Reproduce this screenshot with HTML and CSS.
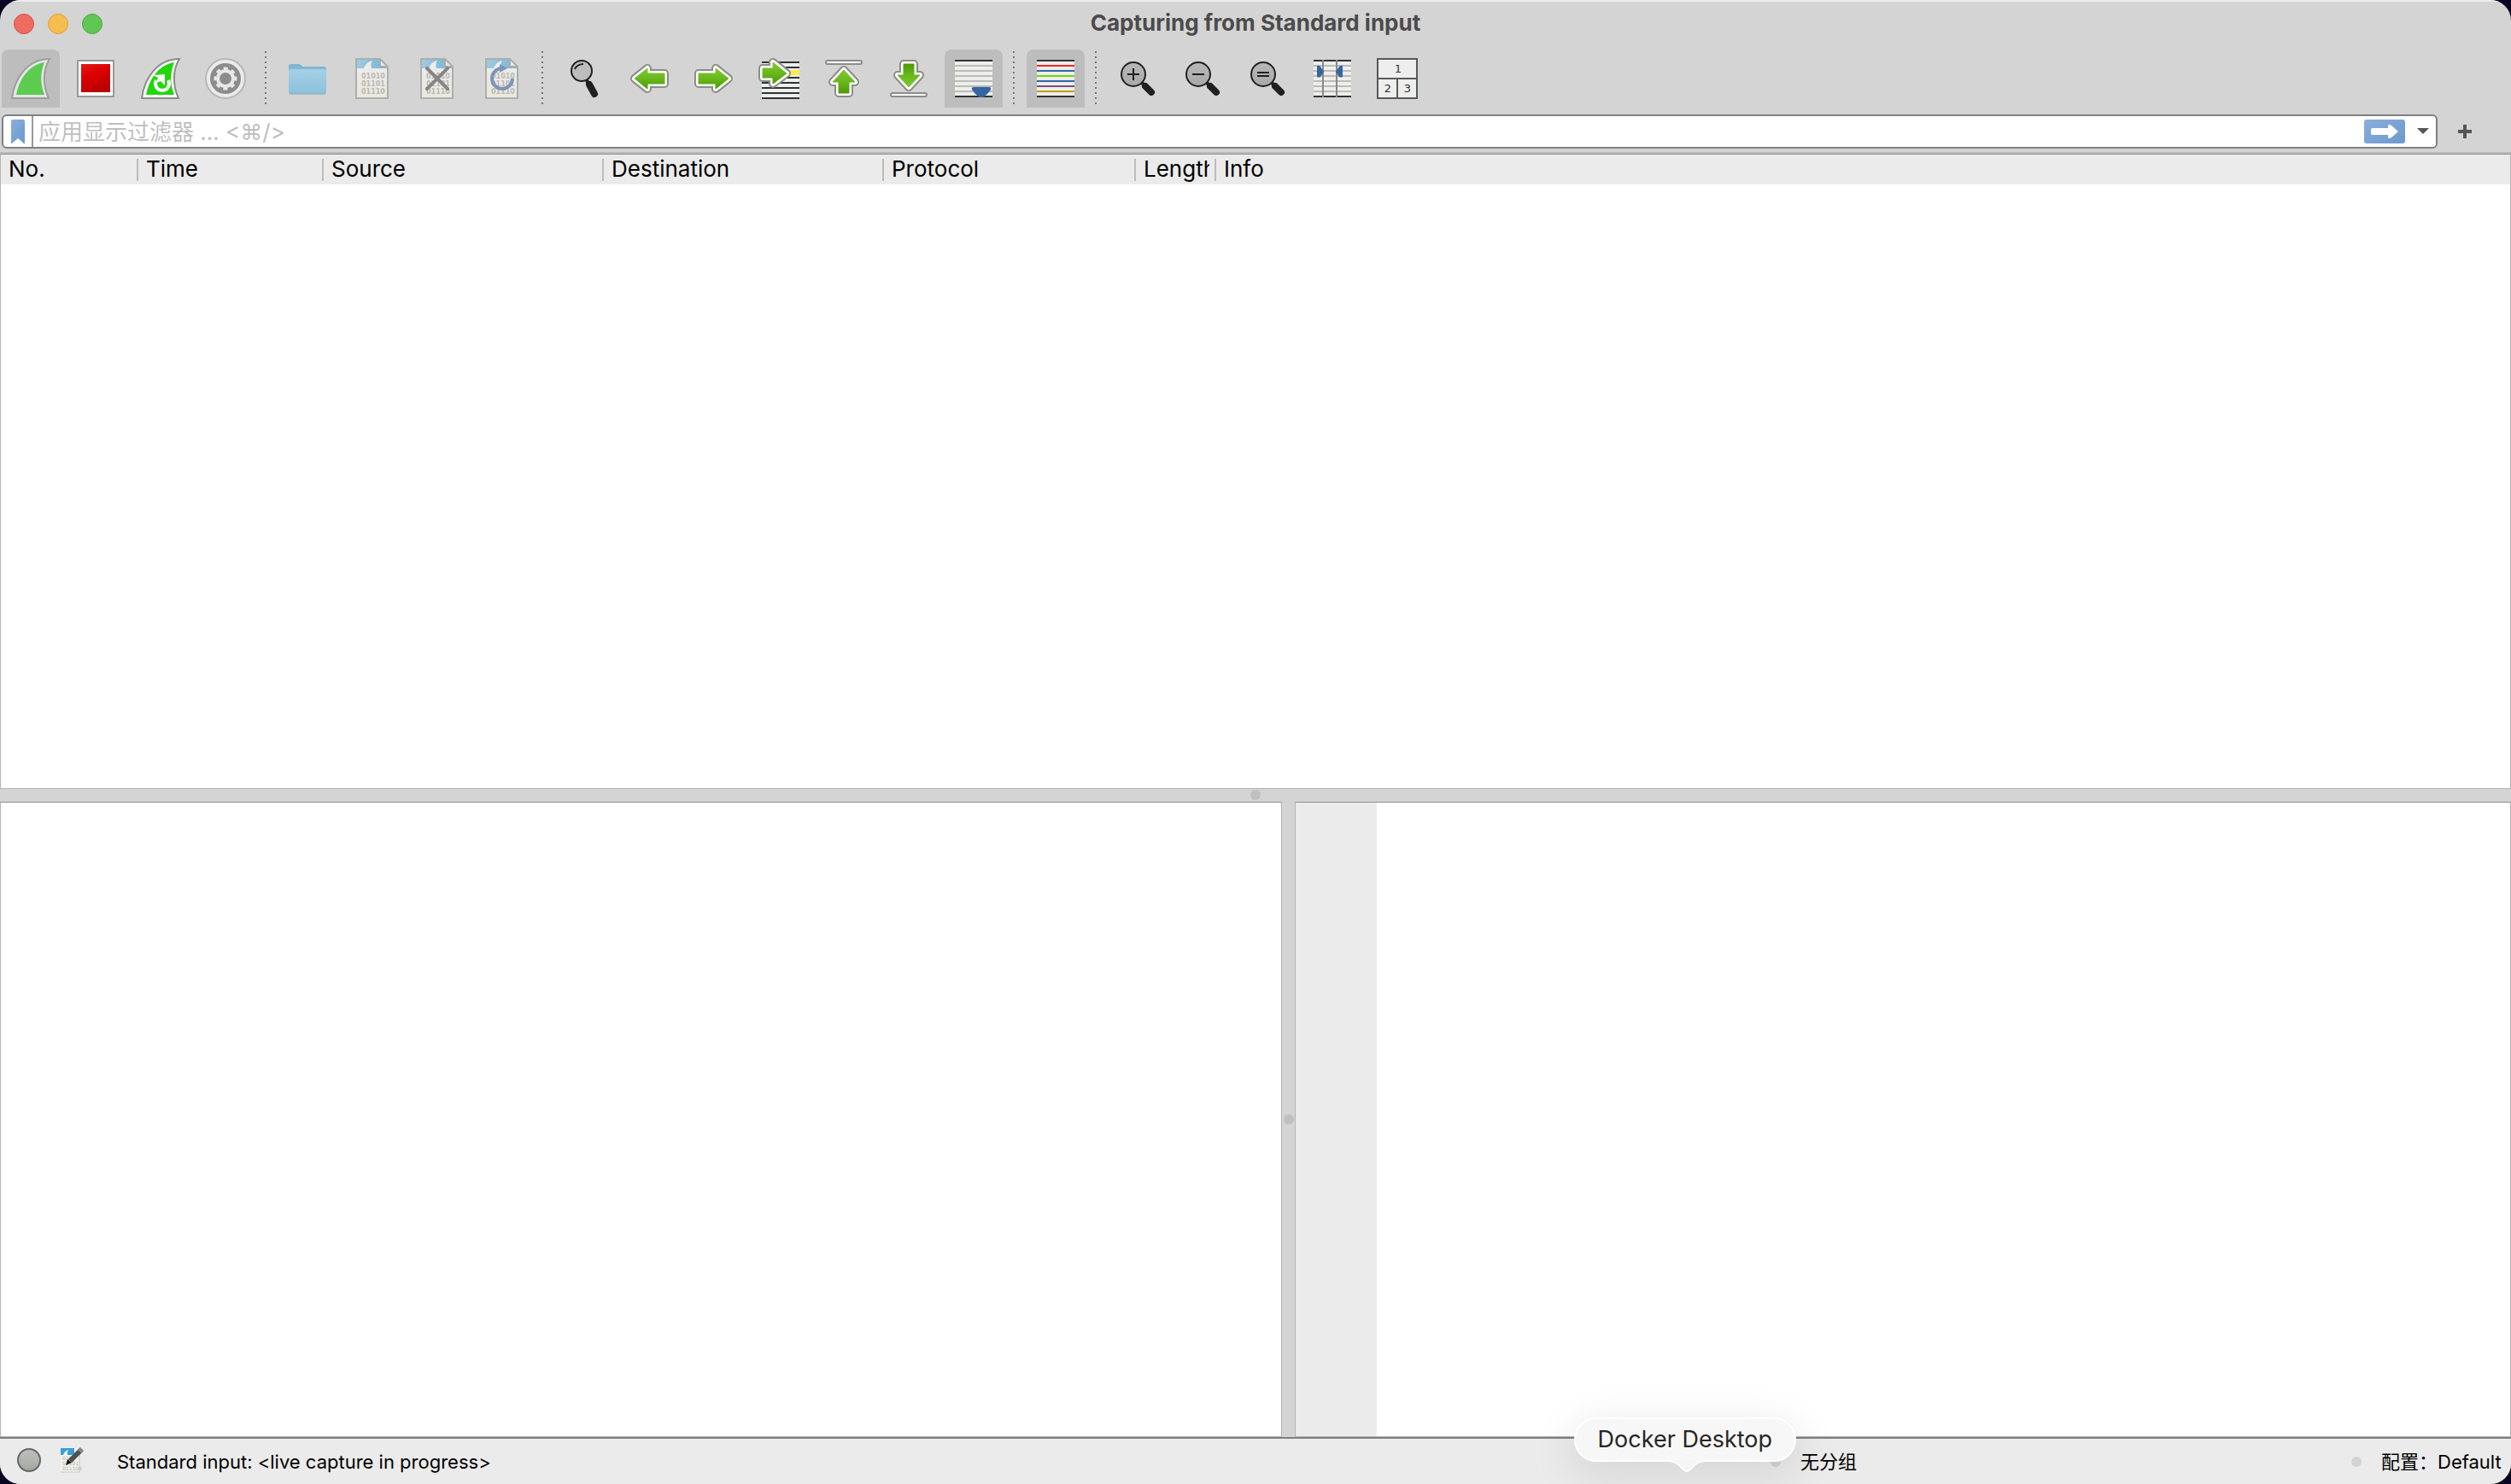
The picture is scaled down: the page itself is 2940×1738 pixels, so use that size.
FILE: index.html
```html
<!DOCTYPE html>
<html lang="zh-CN">
<head>
<meta charset="utf-8">
<title>Capturing from Standard input</title>
<link rel="stylesheet" href="styles.css">
</head>
<body>
<svg class="defs" aria-hidden="true">
  <defs>
    <linearGradient id="green" x1="0" y1="0" x2="0" y2="1"><stop offset="0" stop-color="#80c837"/><stop offset=".5" stop-color="#69b81c"/><stop offset="1" stop-color="#4e9a06"/></linearGradient>
    <linearGradient id="red" x1="0" y1="0" x2=".4" y2="1"><stop offset="0" stop-color="#e01c1c"/><stop offset=".45" stop-color="#dd0000"/><stop offset="1" stop-color="#b80000"/></linearGradient>
    <linearGradient id="folder" x1="0" y1="0" x2="0" y2="1"><stop offset="0" stop-color="#a4d0e6"/><stop offset="1" stop-color="#8bc1dc"/></linearGradient>
    <linearGradient id="sky" x1="0" y1="0" x2="1" y2="0"><stop offset="0" stop-color="#9dcbe2"/><stop offset="1" stop-color="#72b5d6"/></linearGradient>
    <linearGradient id="paper" x1="0" y1="0" x2="0" y2="1"><stop offset="0" stop-color="#ececec"/><stop offset="1" stop-color="#e9e8dc"/></linearGradient>
    <linearGradient id="blue" x1="0" y1="0" x2="1" y2="1"><stop offset="0" stop-color="#8aaedb"/><stop offset="1" stop-color="#6b99cf"/></linearGradient>
    <linearGradient id="lens" x1="0" y1="0" x2="0" y2="1"><stop offset="0" stop-color="#b8b8b8"/><stop offset="1" stop-color="#a8a8a8"/></linearGradient>
    <linearGradient id="ball" x1="0" y1="0" x2="0" y2="1"><stop offset="0" stop-color="#bfc1bc"/><stop offset="1" stop-color="#a4a69f"/></linearGradient>
    <symbol id="fin" viewBox="0 0 68 68">
      <path d="M12 57C15 34 30 11 56 11C48 24 48 42 55 57Z" fill="#fff" stroke="#8c8c8c" stroke-width="2"/>
      <path d="M17 53C20 36 31 18 50 15C45 28 45 40 50 53Z" fill="#22d60c"/>
    </symbol>
    <symbol id="doc" viewBox="0 0 68 68">
      <path d="M15 11H43L52 20V57H15Z" fill="url(#paper)"/>
      <path d="M16 12H43V20H51V22H16Z" fill="url(#sky)"/>
      <path d="M24 22C26 17 29 14 34 13C32 16 32 19 33 22Z" fill="#ececec"/>
      <path d="M43 11V20H52Z" fill="#e6e6e4"/>
      <path d="M15 11H43L52 20V57H15ZM43 11V20H52" fill="none" stroke="#aeaeaa" stroke-width="2"/>
      <g class="bits"><text x="21" y="34">01010</text><text x="21" y="43">01101</text><text x="21" y="52">01110</text></g>
    </symbol>
    <symbol id="arrow" viewBox="0 0 68 68">
      <g stroke-linejoin="round"><path d="M17 34L32 22V28H52V40H32V46Z" fill="none" stroke="#8c8d88" stroke-width="10"/>
      <path d="M17 34L32 22V28H52V40H32V46Z" fill="none" stroke="#fff" stroke-width="6"/>
      <path d="M17 34L32 22V28H52V40H32V46Z" fill="url(#green)" stroke="url(#green)"/></g>
    </symbol>
    <symbol id="sheet" viewBox="0 0 68 68">
      <path d="M12 12H56V56H12Z" fill="#eeeeec"/>
      <path d="M12 19H56M12 25H56M12 31H56M12 37H56M12 43H56M12 49H56" stroke="#babdb6" stroke-width="2"/>
      <path d="M12 13H56M12 55H56" stroke="#2e3436" stroke-width="2"/>
    </symbol>
    <symbol id="glass" viewBox="0 0 68 68">
      <path d="M43 43L50 50" stroke="#202020" stroke-width="8" stroke-linecap="round"/><path d="M38 38L43 43" stroke="#202020" stroke-width="4"/>
      <circle cx="29" cy="29" r="14" fill="url(#lens)" stroke="#202020" stroke-width="2"/>
    </symbol>
  </defs>
</svg>
<div class="window">
  <header class="titlebar">
    <div class="lights">
      <button class="light light-close" aria-label="Close"></button>
      <button class="light light-minimize" aria-label="Minimize"></button>
      <button class="light light-zoom" aria-label="Zoom"></button>
    </div>
    <h1 class="title">Capturing from Standard input</h1>
  </header>

  <nav class="toolbar" aria-label="Main toolbar">
    <button class="tool tool-on" aria-label="Start capture"><svg class="icon faded"><use href="#fin"/></svg></button>
    <button class="tool" aria-label="Stop capture"><svg class="icon"><path d="M13 13H55V55H13Z" fill="#fff" stroke="#999" stroke-width="2"/><path d="M17 17H51V50H17Z" fill="url(#red)"/></svg></button>
    <button class="tool" aria-label="Restart capture"><svg class="icon"><use href="#fin"/><path d="M29 36A8 8 0 1 0 43 36" fill="none" stroke="#fff" stroke-width="4"/><path d="M25 30L39 29V42L34 37L29 39L31 33Z" fill="#fff"/></svg></button>
    <button class="tool" aria-label="Capture options"><svg class="icon"><circle cx="34" cy="34" r="23" fill="#ebebeb" stroke="#b7b7b7" stroke-width="2"/><circle cx="34" cy="34" r="18" fill="#8c8c8c"/><circle cx="34" cy="34" r="12" fill="none" stroke="#e8e8e8" stroke-width="3" stroke-dasharray="5 4.42" transform="rotate(-12 34 34)"/><circle cx="34" cy="34" r="9" fill="none" stroke="#e8e8e8" stroke-width="4"/></svg></button>
    <span class="divider"></span>
    <button class="tool" aria-label="Open file"><svg class="icon"><path d="M12 20Q12 17 15 17H24Q27 17 28 20H53Q56 20 56 23V50Q56 52 54 52H14Q12 52 12 50Z" fill="#80b7d2"/><path d="M12 25Q12 23 14 23H54Q56 23 56 25V50Q56 52 54 52H14Q12 52 12 50Z" fill="url(#folder)"/><path d="M13 52H55" stroke="#8aa9b8"/></svg></button>
    <button class="tool" aria-label="Save file"><svg class="icon"><use href="#doc"/></svg></button>
    <button class="tool" aria-label="Close file"><svg class="icon"><use href="#doc"/><path d="M22 22L46 46M46 22L22 46" stroke="#858585" stroke-width="4" stroke-linecap="round"/></svg></button>
    <button class="tool" aria-label="Reload file"><svg class="icon"><use href="#doc"/><path d="M33 22A12 12 0 1 0 46 34" fill="none" stroke="#7f94ba" stroke-width="4"/><path d="M31 17L40 22L31 27Z" fill="#7f94ba"/></svg></button>
    <span class="divider"></span>
    <button class="tool" aria-label="Find packet"><svg class="icon"><circle cx="31" cy="25" r="12" fill="#bdbdbd" stroke="#202020" stroke-width="2"/><path d="M23 23Q26 17 33 17" fill="none" stroke="#202020" stroke-width="2"/><path d="M37 36L40 42" stroke="#202020" stroke-width="4"/><path d="M40 41L46 52" stroke="#202020" stroke-width="8" stroke-linecap="round"/></svg></button>
    <button class="tool" aria-label="Previous packet"><svg class="icon"><use href="#arrow"/></svg></button>
    <button class="tool" aria-label="Next packet"><svg class="icon"><use href="#arrow" transform="matrix(-1 0 0 1 68 0)"/></svg></button>
    <button class="tool" aria-label="Go to packet"><svg class="icon"><path d="M14 14H58V58H14Z" fill="#eeeeec"/><path d="M14 15H58M14 21H58M14 33H58M14 39H58M14 45H58M14 51H58M14 57H58" stroke="#2e3436" stroke-width="2"/><path d="M40 24H58V30H40Z" fill="#fce94f"/><g stroke-linejoin="round"><path d="M15 22H27V15L43 28L27 40V33H15Z" fill="none" stroke="#8c8d88" stroke-width="10"/><path d="M15 22H27V15L43 28L27 40V33H15Z" fill="url(#green)" stroke="#fff" stroke-width="6"/><path d="M15 22H27V15L43 28L27 40V33H15Z" fill="url(#green)" stroke="url(#green)"/></g></svg></button>
    <button class="tool" aria-label="First packet"><svg class="icon"><g id="edge"><rect x="13" y="13" width="42" height="4" rx="2" fill="#fff" stroke="#8c8d88" stroke-width="2"/><g stroke-linejoin="round"><path d="M34 24L47 38H40V51H28V38H21Z" fill="none" stroke="#8c8d88" stroke-width="10"/><path d="M34 24L47 38H40V51H28V38H21Z" fill="none" stroke="#fff" stroke-width="6"/><path d="M34 24L47 38H40V51H28V38H21Z" fill="url(#green)" stroke="url(#green)"/></g></g></svg></button>
    <button class="tool" aria-label="Last packet"><svg class="icon"><use href="#edge" transform="matrix(1 0 0 -1 0 68)"/></svg></button>
    <button class="tool tool-on" aria-label="Auto scroll"><svg class="icon"><use href="#sheet"/><path d="M34 44H52Q55 44 54 47Q51 52 45 56H41Q35 52 32 47Q31 44 34 44Z" fill="#3465a4"/></svg></button>
    <span class="divider"></span>
    <button class="tool tool-on" aria-label="Colorize packets"><svg class="icon"><path d="M12 12H56V56H12Z" fill="#eeeeec"/><g stroke-width="2"><path d="M12 13H56M12 55H56" stroke="#2e3436"/><path d="M12 19H56" stroke="#ef2929"/><path d="M12 25H56M12 37H56" stroke="#3465a4"/><path d="M12 31H56" stroke="#73d216"/><path d="M12 43H56" stroke="#75507b"/><path d="M12 49H56" stroke="#c4a000"/></g></svg></button>
    <span class="divider"></span>
    <button class="tool" aria-label="Zoom in"><svg class="icon"><use href="#glass"/><path d="M22 29H36M29 22V36" stroke="#202020" stroke-width="2"/></svg></button>
    <button class="tool" aria-label="Zoom out"><svg class="icon"><use href="#glass"/><path d="M22 29H36" stroke="#202020" stroke-width="2"/></svg></button>
    <button class="tool" aria-label="Normal size"><svg class="icon"><use href="#glass"/><path d="M22 27H36M22 31H36" stroke="#202020" stroke-width="2"/></svg></button>
    <button class="tool" aria-label="Resize columns"><svg class="icon"><use href="#sheet"/><path d="M23 12V56M39 12V56" stroke="#888a85" stroke-width="2"/><path d="M16 19Q18 18 20 20L24 26L20 32Q18 33 16 32ZM46 19Q44 18 42 20L38 26L42 32Q44 33 46 32Z" fill="#3465a4"/></svg></button>
    <button class="tool" aria-label="Layout"><svg class="icon"><path d="M11 11H57V57H11ZM11 34H57M34 34V57" fill="#eeeeec" stroke="#555a5c" stroke-width="2"/><g class="digits"><text x="35" y="27">1</text><text x="23" y="50">2</text><text x="46" y="50">3</text></g></svg></button>
  </nav>

  <form class="filterbar">
    <div class="filter">
      <button class="bookmark" type="button" aria-label="Bookmarks"><svg width="16" height="28"><path d="M0 2Q0 0 2 0H14Q16 0 16 2V28H15L8 22L1 28H0Z" fill="url(#blue)"/></svg></button>
      <input class="filter-input" type="text" aria-label="显示过滤器" placeholder="应用显示过滤器 … &lt;⌘/&gt;">
      <button class="apply" type="button" aria-label="Apply"><svg width="48" height="28"><rect width="48" height="28" rx="3" fill="url(#blue)"/><path d="M10 10H28V7Q29 5 32 7L40 14L32 21Q29 23 28 21V18H10Q8 18 8 16V12Q8 10 10 10Z" fill="#fff"/></svg></button>
      <button class="recent" type="button" aria-label="Recent filters"><svg width="14" height="8"><path d="M0 0H14L7 7Z" fill="#555753"/></svg></button>
    </div>
    <button class="add" type="button" aria-label="Add filter button"><svg width="16" height="16"><path d="M0 8H16M8 0V16" stroke="#555" stroke-width="4"/></svg></button>
  </form>

  <main class="content">
    <section class="packets">
      <table class="packet-table">
        <colgroup><col class="w-no"><col class="w-time"><col class="w-addr"><col class="w-addr"><col class="w-proto"><col class="w-len"><col></colgroup>
        <thead><tr><th><span>No.</span></th><th><span>Time</span></th><th><span>Source</span></th><th><span>Destination</span></th><th><span>Protocol</span></th><th><span>Length</span></th><th><span>Info</span></th></tr></thead>
      </table>
    </section>
    <div class="split split-row"></div>
    <div class="panes">
      <section class="details"></section>
      <div class="split split-col"></div>
      <section class="bytes"><div class="gutter"></div></section>
    </div>
  </main>

  <footer class="status">
    <div class="status-main">
      <button class="status-button" aria-label="Expert information"><svg width="30" height="30"><circle cx="15" cy="15" r="13" fill="url(#ball)" stroke="#63676a" stroke-width="2"/></svg></button>
      <button class="status-button" aria-label="Capture comment"><svg width="30" height="30"><path d="M2 1H24V29H2Z" fill="#f4f4ee"/><path d="M2 1H18V9H2Z" fill="#38a0d6"/><path d="M5 9Q7 4 11 3Q9 6 10 9Z" fill="#f4f4ee"/><g class="bits-small"><text x="4" y="15">0101</text><text x="4" y="21">01101</text><text x="4" y="27">011100</text></g><path d="M2 29H24V8" fill="none" stroke="#c4c4bc"/><path d="M13 16L26 3" stroke="#505050" stroke-width="6"/><path d="M24 5L27 2" stroke="#888" stroke-width="6"/><path d="M8 21L10 14L15 18Z" fill="#151515"/></svg></button>
      <span class="status-text">Standard input: &lt;live capture in progress&gt;</span>
    </div>
    <div class="status-part">无分组</div>
    <div class="status-part">配置：Default</div>
  </footer>
  <div class="tooltip" role="tooltip">Docker Desktop<svg class="tail" width="44" height="16"><path d="M0 0C14 0 15 12 22 14C29 12 30 0 44 0Z" fill="#f5f5f5"/><path d="M0 1C14 1 15 12 22 13C29 12 30 1 44 1" fill="none" stroke="#fff" stroke-width="2"/></svg></div>
</div>
</body>
</html>
```
FILE: styles.css
```css
* { box-sizing: border-box; }

body {
  margin: 0;
  background: #0a0420;
  color: #000;
  font-family: Inter, "Noto Sans CJK SC", sans-serif;
  font-size: 26px;
}

button {
  display: grid;
  place-items: center;
  margin: 0;
  padding: 0;
  border: 0;
  background: none;
  font: inherit;
}

svg { display: block; }

.defs {
  position: absolute;
  width: 0;
  height: 0;
}

.window {
  position: relative;
  display: flex;
  flex-direction: column;
  min-height: 100vh;
  overflow: hidden;
  border-radius: 24px;
  background: #d4d4d4;
}

/* Title bar */
.titlebar {
  display: grid;
  grid-template-columns: 1fr auto 1fr;
  align-items: center;
  height: 58px;
  padding: 0 16px 4px;
  border-top: 2px solid #ededed;
}

.lights { display: flex; gap: 16px; }

.light {
  width: 24px;
  height: 24px;
  border: 1px solid;
  border-radius: 50%;
}

.light-close { background: #ed6b60; border-color: #d55044; }
.light-minimize { background: #f5bf50; border-color: #d8a03b; }
.light-zoom { background: #62c655; border-color: #4aa93d; }

.title {
  margin: 0;
  padding-bottom: 2px;
  color: #4b4b4b;
  font-size: 26px;
  font-weight: 700;
  line-height: 32px;
}

/* Toolbar */
.toolbar {
  display: flex;
  gap: 8px;
  padding: 0 2px 8px;
}

.tool {
  width: 68px;
  height: 68px;
}

.tool-on {
  border-radius: 8px 8px 0 0;
  background: #bdbdbd;
}

.icon { width: 68px; height: 68px; }
.faded { opacity: .62; }

.divider {
  width: 12px;
  height: 64px;
  margin-top: 2px;
  background: repeating-linear-gradient(#777 0 2px, transparent 2px 6px) 4px 0 / 2px 100% no-repeat;
}

.bits { fill: #b9b9b5; font: 700 8px "DejaVu Sans", sans-serif; }
.bits-small { fill: #aaa; font: 6px "DejaVu Sans", sans-serif; }
.digits { fill: #2e3436; font: 13px "DejaVu Sans", sans-serif; text-anchor: middle; }

/* Display filter */
.filterbar {
  display: flex;
  align-items: center;
  padding: 0 2px 4px;
}

.filter {
  display: flex;
  flex: 1;
  height: 40px;
  border: 2px solid #808080;
  border-radius: 6px;
  background: #fff;
}

.bookmark {
  width: 35px;
  border-right: 2px solid #999;
}

.filter-input {
  flex: 1;
  min-width: 0;
  padding: 2px 6px 0;
  border: 0;
  outline: 0;
  background: none;
  font: inherit;
  line-height: 34px;
}

.filter-input::placeholder { color: #bfbfbf; opacity: 1; }
.apply { width: 48px; }
.recent { width: 36px; padding-left: 6px; }
.add { width: 84px; padding-right: 20px; }

/* Packet list and lower panes */
.content {
  display: flex;
  flex: 1;
  flex-direction: column;
  border-top: 2px solid #bcbcbc;
}

.packets,
.details,
.bytes {
  border: 1px solid #b4b4b4;
  border-top-color: #8f8f8f;
  background: #fff;
}

.packets { flex: 742 1 0; }

.packet-table {
  width: 100%;
  table-layout: fixed;
  border-collapse: collapse;
  background: #ebebeb;
}

.packet-table th {
  height: 35px;
  padding: 0;
  text-align: left;
  font-weight: 400;
}

.packet-table span {
  display: block;
  overflow: hidden;
  margin-right: 8px;
  padding: 0 0 2px 9px;
  line-height: 33px;
  white-space: nowrap;
}

.packet-table th:not(:last-child) {
  background: linear-gradient(#bdbdbd, #bdbdbd) right center / 2px 26px no-repeat;
}

.w-no { width: 161px; }
.w-time { width: 217px; }
.w-addr { width: 328px; }
.w-proto { width: 295px; }
.w-len { width: 94px; }

.split {
  display: grid;
  place-items: center;
}

.split::before,
.status-part::before {
  width: 12px;
  height: 12px;
  border-radius: 50%;
  background: #c0c0c0;
  content: "";
}

.split-row { height: 15px; }

.panes {
  display: grid;
  flex: 745 1 0;
  grid-template-columns: 1501fr 15px 1424fr;
}

.bytes { display: flex; }
.gutter { width: 95px; background: #ebebeb; }

/* Status bar */
.status {
  display: grid;
  grid-template-columns: 2073fr 680fr 187px;
  align-items: center;
  height: 55px;
  border-top: 2px solid #808080;
  background: #ebebeb;
  font-size: 22px;
  line-height: 28px;
}

.status-main,
.status-part {
  display: flex;
  align-items: center;
  padding-top: 1px;
  white-space: nowrap;
}

.status-main { gap: 20px; padding-left: 19px; }
.status-text { padding-left: 18px; }
.status-button { height: 36px; padding-bottom: 4px; }
.status-part { gap: 23px; }
.status-part::before { background: #d3d3d3; }

/* Dock label floating over the window */
.tooltip {
  position: absolute;
  right: 837px;
  bottom: 26px;
  height: 52px;
  padding: 0 26px;
  border: 2px solid #fff;
  border-radius: 26px;
  background: #f7f7f7;
  box-shadow: 0 12px 50px 6px rgba(0, 0, 0, .09);
  color: #262626;
  font-size: 27px;
  line-height: 48px;
  white-space: nowrap;
}

.tail {
  position: absolute;
  top: 48px;
  left: calc(50% - 20px);
}
```
